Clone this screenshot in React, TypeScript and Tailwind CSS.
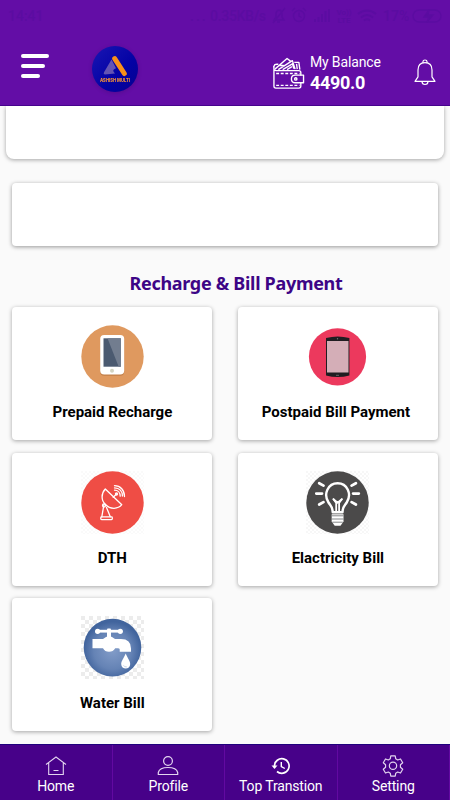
import type { ReactNode } from "react";

type Service = {
  name: string;
  icon: ReactNode;
  labelClass?: string;
};

type NavItem = {
  label: string;
  icon: ReactNode;
};

const Checker = ({ id, color, size }: { id: string; color: string; size: number }) => (
  <>
    <pattern id={id} width={size * 2} height={size * 2} patternUnits="userSpaceOnUse">
      <rect width={size} height={size} fill={color} />
      <rect x={size} y={size} width={size} height={size} fill={color} />
    </pattern>
    <rect width="63" height="63" fill={`url(#${id})`} />
  </>
);

const PrepaidIcon = () => (
  <svg width="63" height="63" viewBox="0 0 63 63">
    <circle cx="31.5" cy="31.5" r="31.2" fill="#df995f" />
    <rect x="19.2" y="11.2" width="24" height="39.6" rx="4" fill="#c27f48" />
    <rect x="19.2" y="10" width="24" height="39.6" rx="4" fill="#fff" />
    <path d="M22.5 13.300h17.300v28.400H22.500z" fill="#4b5a70" />
    <path d="M26.500 13.300h13.300v28.400h-2.100z" fill="#727d8f" />
    <circle cx="31" cy="45.700" r="2" fill="#d3d4c2" />
  </svg>
);

const PostpaidIcon = () => (
  <svg width="63" height="63" viewBox="0 0 63 63">
    <circle cx="31.5" cy="31.8" r="28.6" fill="#ec395d" />
    <path d="M20 13q11.7-3 23.4 0v37.5q-11.7 3-23.4 0z" fill="#201d21" />
    <path d="M21 16h21.500v31.500H21z" fill="#d4aeb7" />
    <circle cx="31.5" cy="13.7" r=".7" fill="#777" />
    <path d="M30 50.3h3" stroke="#777" strokeWidth=".8" />
  </svg>
);

const DishIcon = () => (
  <svg width="63" height="63" viewBox="0 0 63 63" fill="none">
    <Checker id="dth-bg" color="#fafafa" size={2} />
    <circle cx="31.5" cy="31.5" r="31.2" fill="#ef4d45" />
    <g stroke="#fff" strokeWidth="1.3" strokeLinecap="round" strokeLinejoin="round">
      <path d="M24.3 18C20 22.5 20 29.5 24.5 33.5C29 38.5 37 38.5 40.8 33.7Z" />
      <path d="M32.2 26.3l3.2-3.2" />
      <circle cx="35.5" cy="23" r="1" />
      <path d="M33.5 19.2c3.5 0 5.7 2.5 5.7 6" />
      <path d="M33.5 16.9c5 0 7.9 3.4 7.9 8.2" />
      <path d="M33.5 14.7c6 0 10 4.5 10 10.8" />
      <path d="M22.8 34.3l-2 11.5M25.5 36.5l3.8 9.3" />
      <circle cx="23" cy="34.5" r="1.5" />
      <rect x="19.8" y="45.9" width="11.5" height="2.7" rx=".8" />
    </g>
  </svg>
);

const BulbIcon = () => (
  <svg width="63" height="63" viewBox="0 0 63 63" fill="none">
    <Checker id="bulb-bg" color="#f7f7f7" size={2} />
    <circle cx="31.5" cy="31.5" r="31.2" fill="#4b4a4a" />
    <g stroke="#fff" strokeWidth="2.4" strokeLinecap="round" strokeLinejoin="round">
      <path d="M26.7 41.2c0-5.2-2.2-6.5-4.2-9.7c-5.5-8.5-.5-19.3 9.1-19.3s14.6 10.8 9.1 19.3c-2 3.2-4.2 4.5-4.2 9.7z" />
      <path d="M13.2 12.2l4.3 2.4M10.3 22.6h5.7M13.2 33.5l4.3-2.4M49.9 12.2l-4.3 2.4M52.8 22.6h-5.7M49.9 33.5l-4.3-2.4" strokeWidth="2.8" />
      <path d="M27.5 28.3l2.7 3.8V40M35.8 28.3l-2.7 3.8V40" strokeWidth="1.8" />
      <path d="M27.5 28.3l4.1 3.5l4.2-3.5" strokeWidth="1.8" />
    </g>
    <path d="M25.7 43.3h11.8v7.2l-3 4.2h-5.8l-3-4.2z" fill="#fff" />
    <path d="M25.5 44.8h12M25.5 48h12M26.3 51.2h10.5" stroke="#77797a" strokeWidth=".9" />
  </svg>
);

const TapIcon = () => (
  <svg width="63" height="63" viewBox="0 0 63 63">
    <defs>
      <radialGradient id="tap-fill" cx=".5" cy=".55" r=".5">
        <stop offset="0" stopColor="#829cc8" />
        <stop offset=".65" stopColor="#6583b5" />
        <stop offset="1" stopColor="#41649d" />
      </radialGradient>
    </defs>
    <Checker id="tap-bg" color="#ececec" size={4} />
    <circle cx="31.5" cy="31.6" r="28.8" fill="url(#tap-fill)" />
    <g fill="#fff">
      <path d="M16.5 13.8h23v2.8h-23z" />
      <circle cx="16.6" cy="15.3" r="2.6" />
      <circle cx="39.3" cy="15.3" r="2.6" />
      <rect x="26" y="12.5" width="4" height="11" rx="1" />
      <path d="M11.5 23h10.5l3-2q3-1.5 6 0l3 2h6q10 0 10 9.5v3.3H38.7v-2.2q0-1.4-2-1.4h-2.5q-2 3.5-6.2 3.5t-6-3.5H11.5z" />
      <path d="M44.7 37.5c2 5 4.5 7.500 4.5 10.500c0 6-9 6-9 0c0-3 2.500-5.500 4.500-10.500z" />
    </g>
    <path d="M42.5 49.3q1 2 3.3 1.6" fill="none" stroke="#c7d2e5" strokeWidth="1" />
  </svg>
);

const WalletIcon = () => (
  <svg className="shrink-0" width="33" height="33" viewBox="0 0 34 34" fill="none" stroke="#fff" strokeWidth="1.4" strokeLinejoin="round">
    <path d="M2 9.5q-1 5 3 4.5h22.5q2.2 0 2.2 2v3M29.7 26.5V30q0 2-2 2H4q-2 0-2-2V9.5q.5-2 3-2h1.5" />
    <path d="M3 12.5L15.5 1.5l3.8 3M6.500 13L21 3.7l2.8 8.8M11 13l10-6 1.5 5M15.5 13l5-3M23 5.5h4.700l1 7.5M25.3 7l.7 5.5M7.5 8.5l6 .5" />
    <path d="M4.3 17h24M4.3 29.3h24" strokeDasharray="3 1.7" />
    <path d="M32.5 18.7H24q-4 0-4 3.9t4 3.9h8.5z" />
    <circle cx="24.5" cy="22.6" r="1.2" />
  </svg>
);

const BellIcon = () => (
  <svg className="mt-3" width="22" height="27" viewBox="0 0 22 27" fill="none" stroke="#fff" strokeWidth="1.2" strokeLinejoin="round">
    <path d="M9 4V2.5q0-1.500 2-1.500t2 1.500V4" />
    <path d="M1 22.3l3-4.500V11Q4 3.700 11 3.700T18 11v6.800l3 4.500z" />
    <path d="M8 22.5q0 3 3 3t3-3" />
  </svg>
);

const Logo = () => (
  <svg className="ml-[42px] mt-1.5 shrink-0 overflow-visible drop-shadow-sm" width="48" height="48" viewBox="0 0 48 48">
    <defs>
      <linearGradient id="logo-bg" x1="0" y1="0" x2="1" y2="1">
        <stop offset="0" stopColor="#1a16b3" />
        <stop offset=".6" stopColor="#0302a4" />
        <stop offset="1" stopColor="#070191" />
      </linearGradient>
    </defs>
    <circle cx="24" cy="24" r="23" fill="url(#logo-bg)" />
    <path d="M20.5 14.5l4.500 8.800q-5 1.500-1 5.200l-10.200 1q-1.800-.2-.8-2.200z" fill="#6454b3" />
    <path d="M23.7 13.7l9.600 14.800" stroke="#f99019" strokeWidth="5" strokeLinecap="round" />
    <text x="24" y="36.5" textAnchor="middle" textLength="30" lengthAdjust="spacingAndGlyphs" fontFamily="Inter, sans-serif" fontSize="5" fontWeight="800" fill="#f28f35">
      ASHISH MULTI
    </text>
  </svg>
);

const StatusIcons = () => (
  <svg width="178" height="20" viewBox="0 0 178 20" fill="none" stroke="currentColor" strokeWidth="1.4">
    <path d="M4 14h10l-2-3V7q-1-3-3-3T6 7v4zM3 17L15 2M7 16h3" />
    <g transform="translate(3)">
      <circle cx="26" cy="10" r="5.5" />
      <path d="M26 6.5V10l2.5 1.5M19 5l3-3M33 5l-3-3" />
      <path d="M42 16v-3M45.5 16v-5M49 16V8M52.5 16V5M56 16V3" strokeWidth="2" />
      <text x="71" y="8.5" textAnchor="middle" fontFamily="Roboto, sans-serif" fontSize="8" fontWeight="700" fill="currentColor" stroke="none">Vo))</text>
      <text x="71" y="16.5" textAnchor="middle" fontFamily="Roboto, sans-serif" fontSize="8" fontWeight="700" fill="currentColor" stroke="none">LTE</text>
      <path d="M85 8q9-7 18 0M88 11.5q6-5 12 0M91 14.5q3-2.5 6 0" strokeWidth="2" />
      <text x="110" y="15" fontFamily="Roboto, sans-serif" fontSize="14" fontWeight="500" fill="currentColor" stroke="none">17%</text>
      <rect x="140" y="4" width="28" height="12" rx="6" />
      <path d="M156 4l-5 7h5l-2 5 6-7h-5z" fill="currentColor" />
    </g>
  </svg>
);

const services: Service[] = [
  { name: "Prepaid Recharge", icon: <PrepaidIcon /> },
  { name: "Postpaid Bill Payment", icon: <PostpaidIcon />, labelClass: "pr-1" },
  { name: "DTH", icon: <DishIcon /> },
  { name: "Elactricity Bill", icon: <BulbIcon /> },
  { name: "Water Bill", icon: <TapIcon /> },
];

const navItems: NavItem[] = [
  {
    label: "Home",
    icon: (
      <svg width="22" height="22" viewBox="0 0 22 22" fill="none" stroke="#e3d5ef" strokeWidth="1.1">
        <path d="M1 9.5L11 2l10 7.5M3.7 8v11.5h14.600V8M8.500 15.5h5" />
      </svg>
    ),
  },
  {
    label: "Profile",
    icon: (
      <svg width="22" height="22" viewBox="0 0 22 22" fill="none" stroke="#e3d5ef" strokeWidth="1.2">
        <circle cx="11" cy="6" r="4.4" />
        <path d="M1.3 19.5v-2q1.2-5 9.7-5t9.7 5v2z" />
      </svg>
    ),
  },
  {
    label: "Top Transtion",
    icon: (
      <svg width="22" height="22" viewBox="0 0 22 22" fill="none" stroke="#fff" strokeWidth="1.7">
        <path d="M4.5 11a7.3 7.3 0 1 1 2.5 5.5" />
        <path d="M11.3 7v4.5l3.500 2" strokeWidth="1.4" />
        <path d="M1.5 10.5h6l-3 3.5z" fill="#fff" stroke="none" />
      </svg>
    ),
  },
  {
    label: "Setting",
    icon: (
      <svg width="22" height="22" viewBox="0 0 24 24" fill="none" stroke="#e3d5ef" strokeWidth="1.3" strokeLinejoin="round">
        <path d="M9.6 1h4.8l.6 3.2 2.1 1.2 3.1-1.1 2.4 4.1-2.5 2.2v2.8l2.5 2.2-2.4 4.1-3.1-1.1-2.1 1.2-.6 3.2H9.6L9 19.8l-2.1-1.2-3.1 1.1-2.4-4.1 2.5-2.2v-2.8L1.4 8.4l2.4-4.1 3.1 1.1L9 4.2z" />
        <circle cx="12" cy="11.7" r="4" />
      </svg>
    ),
  },
];

const App = () => {
  return (
    <div className="flex h-[800px] w-[450px] flex-col overflow-hidden bg-[#fafafa] font-[Roboto,sans-serif]">
      <header className="flex h-[106px] shrink-0 flex-col border-b border-[#46038d] bg-[#630da6]">
        <div className="flex h-8 items-center pl-2 text-sm font-medium text-[#5b0ca1]">
          <span className="w-[182px]">14:41</span>
          <span className="w-5 tracking-[2px]">...</span>
          <span className="w-[60px] whitespace-nowrap tracking-[-0.3px]">0.35KB/s</span>
          <StatusIcons />
        </div>
        <div className="flex h-[74px] items-center pb-1 pl-[21px] pr-[14px]">
          <button className="mt-1 flex w-7 flex-col gap-1.5 pb-1" aria-label="Menu">
            <span className="h-1 w-7 rounded-full bg-white" />
            <span className="h-1 w-6 rounded-full bg-white" />
            <span className="h-1 w-[19px] rounded-full bg-white" />
          </button>
          <Logo />
          <div className="mt-3.5 flex flex-1 items-center pl-[133px]">
            <WalletIcon />
            <div className="ml-[5px] flex flex-col text-white">
              <span className="text-sm leading-5 tracking-[-0.15px]">My Balance</span>
              <span className="text-lg font-bold leading-[22px] tracking-[-0.3px]">4490.0</span>
            </div>
          </div>
          <BellIcon />
        </div>
      </header>

      <main className="flex flex-1 flex-col">
        <div className="mx-1.5 h-[53px] shrink-0 rounded-b-lg bg-white shadow-[0_1px_4px_rgba(0,0,0,0.35)] [clip-path:inset(0_-8px_-8px_-8px)]" />
        <div className="mx-3 mt-6 h-[63px] shrink-0 rounded bg-white shadow-[0_1px_4px_rgba(0,0,0,0.4)]" />
        <h2 className="mt-[25px] h-6 pl-[22px] text-center font-['Noto_Sans',sans-serif] text-lg font-bold leading-6 tracking-[-0.3px] text-[#3d0586]">
          Recharge &amp; Bill Payment
        </h2>
        <div className="mt-3 grid grid-cols-[200px_200px] gap-x-[25.5px] gap-y-[12.5px] px-[12.4px]">
          {services.map((service) => (
            <div
              key={service.name}
              className="flex h-[133px] flex-col items-center rounded bg-white pt-[18px] shadow-[0_1px_4px_rgba(0,0,0,0.35)]"
            >
              {service.icon}
              <span className={`mt-3.5 whitespace-nowrap text-[15px] font-bold leading-5 text-black ${service.labelClass ?? ""}`}>
                {service.name}
              </span>
            </div>
          ))}
        </div>
      </main>

      <nav className="grid h-14 shrink-0 grid-cols-4 border-t border-[#20017d] bg-[#470189]">
        {navItems.map((item) => (
          <button
            key={item.label}
            className="flex flex-col items-center justify-start border-r border-[#6209a1] pt-2.5 text-sm tracking-[-0.15px] text-white"
          >
            {item.icon}
            <span className="leading-[18px]">{item.label}</span>
          </button>
        ))}
      </nav>
    </div>
  );
};

export default App;
